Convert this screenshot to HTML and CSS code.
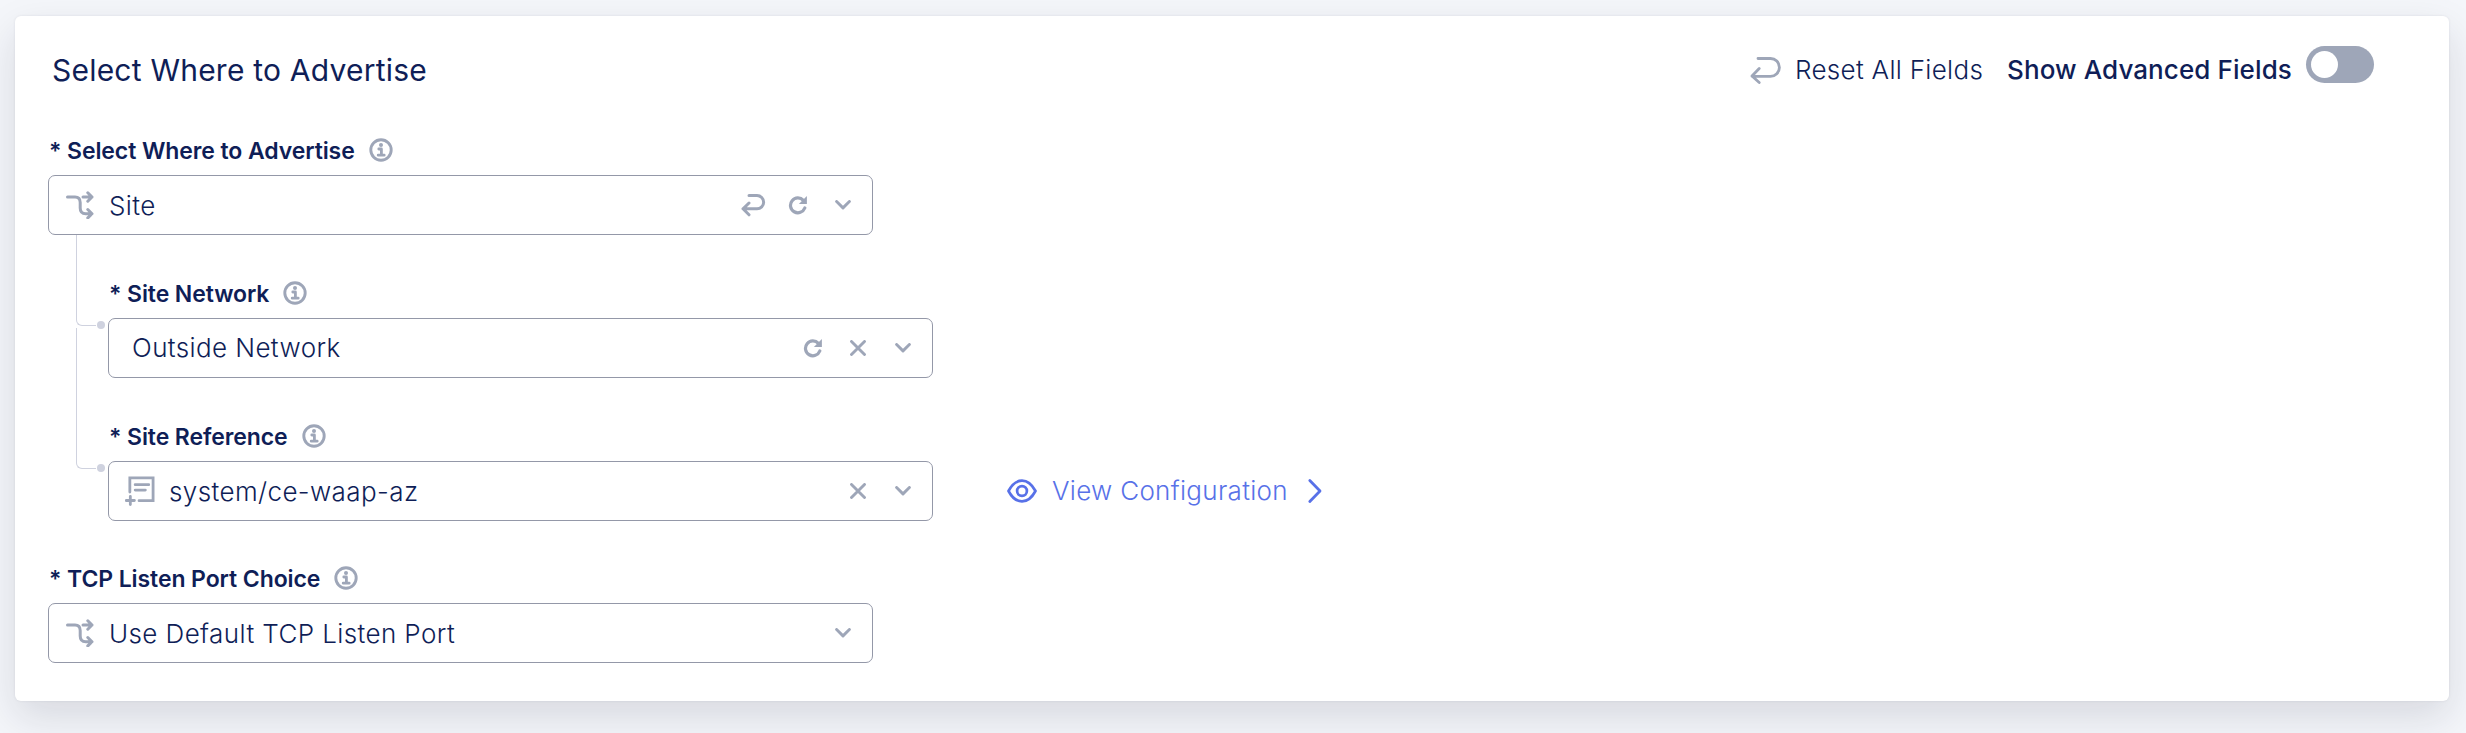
FILE: index.html
```
<!DOCTYPE html>
<html lang="en">
<head>
<meta charset="utf-8">
<title>Select Where to Advertise</title>
<link rel="stylesheet" href="styles.css">
</head>
<body>
<svg class="defs" width="0" height="0">
  <symbol id="info" viewBox="0 0 24 24"><circle cx="12" cy="12" r="10.2" fill="none" stroke="currentColor" stroke-width="2.9"/><circle cx="12" cy="7" r="2" fill="currentColor"/><path d="M9.8 11h2.6v6M9.2 17.2h6" fill="none" stroke="currentColor" stroke-width="2.8" stroke-linecap="round" stroke-linejoin="round"/></symbol>
  <symbol id="branch" viewBox="0 0 28 28"><path d="M1.5 6H9c4 0 5.2 1.800 5.200 5.500V17c0 4 1.600 5.700 5.500 5.700h6M17 6h9M21.800 1.800 26 6l-4.200 4.200M21.800 18.500 26 22.700l-4.200 4.200" fill="none" stroke="currentColor" stroke-width="3" stroke-linecap="round" stroke-linejoin="round"/></symbol>
  <symbol id="doc" viewBox="0 0 32 32"><path d="M5 16.500V2h24v23.500H14.500M10.500 9h14M10.500 14.500h10.500M5.500 21v8.500M1.300 25.300h8.400" fill="none" stroke="currentColor" stroke-width="2.900" stroke-linecap="round" stroke-linejoin="miter"/></symbol>
  <symbol id="refresh" viewBox="0 0 20 20"><path d="M15.400 5.400A7.400 7.400 0 1 0 16.800 13" fill="none" stroke="currentColor" stroke-width="3.200" stroke-linecap="round"/><path d="M18.900 1v8h-8z" fill="currentColor"/></symbol>
  <symbol id="close" viewBox="0 0 16 16"><path d="M1.500 1.500l13 13M14.500 1.500l-13 13" fill="none" stroke="currentColor" stroke-width="2.900" stroke-linecap="round"/></symbol>
  <symbol id="down" viewBox="0 0 16 10"><path d="M1.600 1.500 8 7.900l6.400-6.400" fill="none" stroke="currentColor" stroke-width="2.900" stroke-linecap="round" stroke-linejoin="round"/></symbol>
</svg>

<main class="card">
  <header class="head">
    <h1 class="title">Select Where to Advertise</h1>
    <div class="tools">
      <svg class="reset-icon" viewBox="0 0 30 28"><path d="M8 2.500h12.500a8.200 8.200 0 0 1 0 17.800H2M9.200 12.500 2 20l7.200 6.500" fill="none" stroke="currentColor" stroke-width="2.800" stroke-linecap="round" stroke-linejoin="round"/></svg>
      <span class="reset">Reset All Fields</span>
      <span class="advanced">Show Advanced Fields</span>
      <span class="toggle"><span class="knob"></span></span>
    </div>
  </header>

  <section class="field">
    <div class="label"><span class="label-text">* Select Where to Advertise</span><svg class="info"><use href="#info"/></svg></div>
    <div class="select">
      <svg class="branch"><use href="#branch"/></svg>
      <span class="value">Site</span>
      <svg class="undo" viewBox="0 0 24 24"><path d="M8 2.500h8a6.600 6.600 0 0 1 0 13.300H2M8 10l-6 5.800 6 6" fill="none" stroke="currentColor" stroke-width="3" stroke-linecap="round" stroke-linejoin="round"/></svg>
      <svg class="refresh"><use href="#refresh"/></svg>
      <svg class="down"><use href="#down"/></svg>
    </div>
  </section>

  <section class="field nested">
    <span class="link link-first"></span><span class="dot"></span>
    <div class="label"><span class="label-text">* Site Network</span><svg class="info"><use href="#info"/></svg></div>
    <div class="select">
      <span class="value plain">Outside Network</span>
      <svg class="refresh"><use href="#refresh"/></svg>
      <svg class="close"><use href="#close"/></svg>
      <svg class="down"><use href="#down"/></svg>
    </div>
  </section>

  <section class="field nested last">
    <span class="link"></span><span class="dot"></span>
    <div class="label"><span class="label-text">* Site Reference</span><svg class="info"><use href="#info"/></svg></div>
    <div class="row">
      <div class="select">
        <svg class="doc"><use href="#doc"/></svg>
        <span class="value ref">system/ce-waap-az</span>
        <svg class="close"><use href="#close"/></svg>
        <svg class="down"><use href="#down"/></svg>
      </div>
      <a class="view">
        <svg class="eye" viewBox="0 0 30 24"><path d="M1.500 12C5 5.500 9.500 1.600 15 1.600S25 5.500 28.500 12C25 18.500 20.500 22.400 15 22.400S5 18.500 1.500 12z" fill="none" stroke="currentColor" stroke-width="2.700" stroke-linejoin="round"/><circle cx="15" cy="12" r="4.900" fill="none" stroke="currentColor" stroke-width="2.700"/></svg>
        <span class="view-text">View Configuration</span>
        <svg class="next" viewBox="0 0 14 24"><path d="M1.800 1.500 12 12 1.800 22.500" fill="none" stroke="currentColor" stroke-width="2.800" stroke-linecap="round" stroke-linejoin="round"/></svg>
      </a>
    </div>
  </section>

  <section class="field">
    <div class="label"><span class="label-text">* TCP Listen Port Choice</span><svg class="info"><use href="#info"/></svg></div>
    <div class="select">
      <svg class="branch"><use href="#branch"/></svg>
      <span class="value">Use Default TCP Listen Port</span>
      <svg class="down"><use href="#down"/></svg>
    </div>
  </section>
</main>
</body>
</html>
```

FILE: styles.css
```
* { box-sizing: border-box; }
body {
  margin: 0;
  height: 733px;
  padding: 16px 17px 0 15px;
  overflow: hidden;
  background: #f4f6fa;
  color: #0f1e57;
  font-family: Inter, "Liberation Sans", sans-serif;
  font-optical-sizing: none;
}
svg { display: block; flex: none; color: #9ea6b8; overflow: visible; }
.defs { position: absolute; }
.card {
  height: 685px;
  padding: 0 75px 0 33px;
  border-radius: 6px;
  background: #fff;
  box-shadow: 0 16px 40px rgba(20, 20, 50, .13), 0 0 3px rgba(20, 20, 50, .08);
}
.head {
  display: flex;
  justify-content: space-between;
  height: 116px;
  padding-left: 4px;
}
.title {
  margin: 36px 0 0;
  font-size: 30px;
  line-height: 36px;
  font-weight: 420;
  letter-spacing: .22px;
  white-space: nowrap;
}
.tools { display: flex; align-items: flex-start; font-size: 26px; line-height: 32px; white-space: nowrap; }
.reset-icon { width: 30px; height: 28px; margin: 40px 15px 0 0; }
.reset { width: 212px; margin-top: 38px; font-weight: 340; letter-spacing: .3px; }
.advanced { width: 299px; margin-top: 38px; font-weight: 450; letter-spacing: .1px; }
.toggle { width: 68px; height: 37px; margin-top: 30px; padding: 5px; border-radius: 19px; background: #9ea6b8; }
.knob { display: block; width: 27px; height: 27px; border-radius: 50%; background: #fff; }
.field { position: relative; height: 143px; }
.last { height: 142px; }
.nested { margin-left: 60px; }
.label {
  display: flex;
  align-items: center;
  height: 43px;
  padding: 0 0 6px 1px;
  font-size: 23px;
  font-weight: 600;
  letter-spacing: -.09px;
}
.label-text { line-height: 28px; white-space: nowrap; }
.info { width: 24px; height: 24px; margin: 0 0 1px 14px; }
.select {
  display: flex;
  align-items: center;
  width: 825px;
  height: 60px;
  padding: 0 21px 0 17px;
  border: 1px solid #9498a8;
  border-radius: 7px;
}
.value { flex: 1; margin: 1px 0 0 15px; font-size: 26px; line-height: 32px; font-weight: 340; letter-spacing: .4px; white-space: nowrap; }
.plain { margin: 0 0 0 6px; }
.ref { margin-left: 13px; }
.branch { width: 28px; height: 28px; }
.doc { width: 31px; height: 31px; margin-left: -1px; }
.undo { width: 24px; height: 24px; margin-right: 23px; }
.refresh { width: 20px; height: 20px; margin-right: 27px; }
.close { width: 16px; height: 16px; margin-right: 29px; }
.down { width: 16px; height: 10px; }
.link {
  position: absolute;
  left: -32px;
  top: -90px;
  width: 20px;
  height: 141px;
  border-left: 1px solid #cfd2df;
  border-bottom: 1px solid #cfd2df;
  border-bottom-left-radius: 6px;
}
.link-first { top: -40px; height: 91px; }
.dot { position: absolute; left: -11px; top: 46px; width: 8px; height: 8px; border-radius: 50%; background: #cfd2df; }
.row { display: flex; align-items: center; }
.view { display: flex; align-items: center; margin-left: 74px; color: #5871e8; }
.view svg { color: #5871e8; }
.eye { width: 30px; height: 24px; }
.view-text { width: 256px; margin-left: 15px; font-size: 26px; line-height: 32px; font-weight: 340; letter-spacing: .3px; white-space: nowrap; }
.next { width: 14px; height: 24px; }
```
